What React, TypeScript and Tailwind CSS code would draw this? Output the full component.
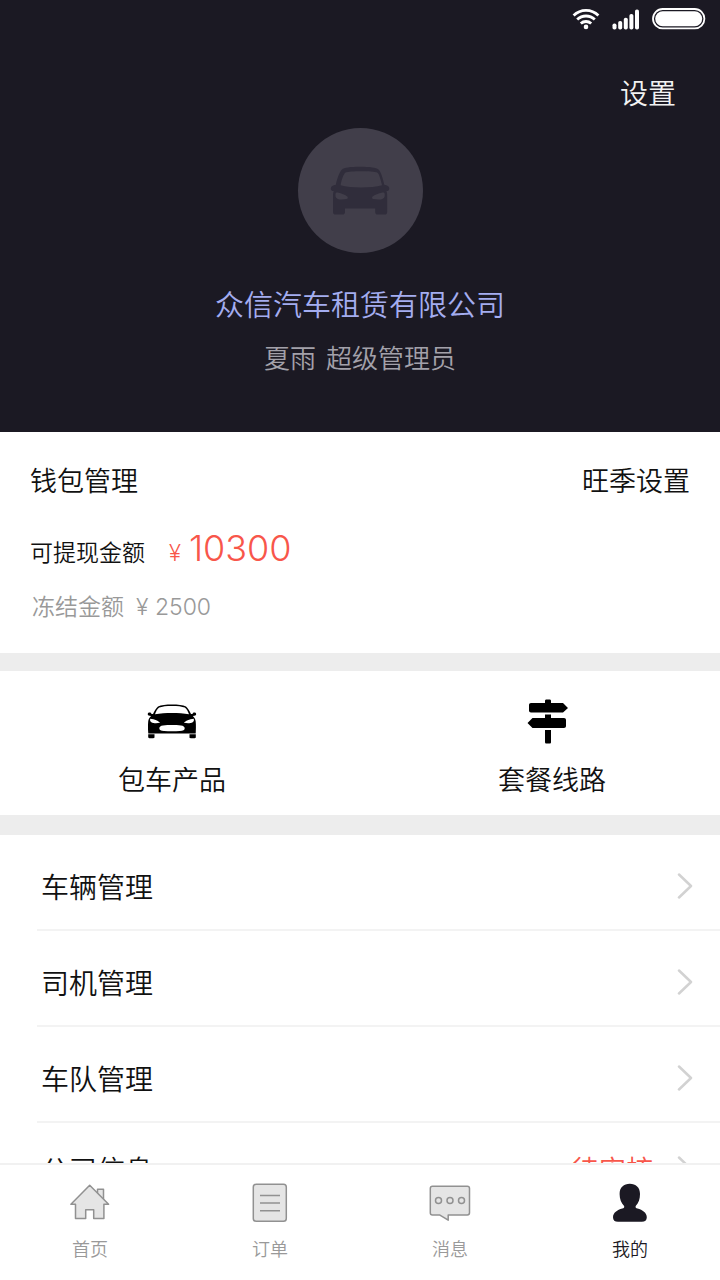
import React from "react";

const WifiIcon = () => (
  <svg width="28" height="22" viewBox="0 0 28 22" fill="none" stroke="#fff" strokeWidth="2.8" aria-hidden="true">
    <path d="M1.6 7.4C8.5 .6 19.5 .6 26.4 7.4" />
    <path d="M5.2 11.6C10.2 6.8 17.8 6.8 22.8 11.6" />
    <path d="M8.8 15.6C11.8 12.8 16.2 12.8 19.2 15.6" />
    <circle cx="14" cy="18.9" r="2.3" fill="#fff" stroke="none" />
  </svg>
);

const SignalIcon = () => (
  <svg width="28" height="21" viewBox="0 0 28 21" fill="#fff" aria-hidden="true">
    <rect x="0.5" y="14.5" width="4" height="6" rx="1.8" />
    <rect x="6.2" y="12" width="4" height="8.5" rx="1.8" />
    <rect x="11.8" y="8.8" width="4" height="11.7" rx="1.8" />
    <rect x="17.4" y="5" width="4" height="15.5" rx="1.8" />
    <rect x="23" y="0.5" width="4" height="20" rx="1.8" />
  </svg>
);

const BatteryIcon = () => (
  <svg width="54" height="22" viewBox="0 0 54 22" fill="none" aria-hidden="true">
    <rect x="1" y="1" width="51.4" height="19.4" rx="9.7" stroke="#fff" strokeWidth="1.8" />
    <rect x="3.2" y="3.2" width="47" height="15" rx="7.5" fill="#fff" />
  </svg>
);

const AvatarCar = () => (
  <svg width="60" height="50" viewBox="0 0 60 50" aria-hidden="true">
    <path
      fill="#302d3b"
      fillRule="evenodd"
      d="M12 3.5C14 1.6 20 .8 30 .8s16 .8 18.500 2.700C51 5.500 53 13 54.300 18.800c3 .2 5 1.700 5 3.600 0 1.600-1 2.600-2.800 2.600.5 1.500.7 3 .7 5V46c0 1.700-1 2.600-2.600 2.600h-6.800c-1.700 0-2.600-1-2.600-2.600v-3.600H15V46c0 1.700-1 2.600-2.600 2.600H5.600C4 48.600 3 47.700 3 46V30c0-2 .2-3.500.7-5C1.800 25 .8 24 .8 22.400c0-1.900 2-3.400 5-3.600C7 13 9.500 5.500 12 3.500zM15.500 6.500C13.500 8 11.500 14 10.600 19.300 16 21 23 21.500 31 21.500s15.500-.7 21-2.200C50.800 14 49.300 8.200 47.500 6.700 45 5.500 38 5.200 31 5.200s-13 .3-15.500 1.300zM5.500 28c.2-1.200 1-1.700 2.200-1.400 4 1 7.500 2.400 9.600 4 .9.900.6 2.300-.8 2.500-2 .3-4.500.6-7.300.3C6.500 33 5 31.200 5.500 28zM54.700 28c-.2-1.200-1-1.700-2.200-1.400-4 1-7.800 2.400-9.900 4-.9.900-.6 2.300.8 2.500 2 .3 4.600.6 7.600.3 2.700-.4 4.200-2.200 3.700-5.400z"
    />
  </svg>
);

const CarIcon = () => (
  <svg width="50" height="36" viewBox="0 0 50 36" aria-hidden="true">
    <path
      fill="#000"
      fillRule="evenodd"
      d="M11 2.500C14 1 19 .5 25 .5s11 .5 14 2c2 1.500 3.500 4.500 5 7.500h1.500c0-1 1-1.700 2.500-1.400 1.400.3 1.600 2.400.4 2.900-.7.3-1.600.4-2.600.4 1.700 1.600 2.700 3.300 2.900 5.600.4 4 .2 8.500 0 12H1.300c-.3-3.500-.5-8-.1-12 .2-2.300 1.200-4 2.900-5.600-1 0-1.900-.1-2.600-.4-1.200-.5-1-2.600.4-2.900C3.500 8.300 4.500 9 4.500 10H6c1.500-3 3-6 5-7.500zM12.200 3.600C10.300 5 9 7.500 8 10.200c5-.9 11-1.200 17-1.200s12 .3 17 1.200c-1-2.700-2.300-5.200-4.200-6.600C35 2.300 30.500 1.900 25 1.900s-10 .4-12.800 1.700zM3.300 14.700c-.5 1.300-.2 2.700 1 3.500 2 1.200 5.500 1.200 8.700.6-1.400-2-5.300-3.800-9.700-4.100zM46.700 14.700c.5 1.300.2 2.700-1 3.500-2 1.200-5.500 1.200-8.700.6 1.400-2 5.300-3.800 9.700-4.100zM16 21.500c-2.300.3-3.700 1.300-3.700 2.700 0 1.900 1.700 2.700 4.700 2.800 5 .3 11 .3 16 0 3-.1 4.700-.9 4.700-2.800 0-1.400-1.400-2.400-3.700-2.700-5.500-.6-12.500-.6-18 0z"
    />
    <path fill="#000" d="M1.200 30.300h6.300v2.800c0 .8-.4 1.200-1.200 1.200H2.400c-.8 0-1.200-.4-1.200-1.200zM42.500 30.300h6.300v2.800c0 .8-.4 1.200-1.200 1.200h-3.900c-.8 0-1.200-.4-1.200-1.200z" />
  </svg>
);

const SignpostIcon = () => (
  <svg width="42" height="46" viewBox="0 0 42 46" fill="#000" aria-hidden="true">
    <path d="M18 4V2c0-1 .5-1.500 1.500-1.500h3c1 0 1.500.5 1.500 1.500v2h12l5 5-5 4.500H4c-1.200 0-2-.8-2-2V6c0-1.200.8-2 2-2z" />
    <path d="M18 19v-3.500h6V19h13c1.200 0 2 .8 2 2v6c0 1.200-.8 2-2 2H5.500L.5 24l5-5z" />
    <path d="M18 31h6v12c0 1-.5 1.500-1.500 1.500h-3c-1 0-1.500-.5-1.500-1.500z" />
  </svg>
);

const HomeIcon = () => (
  <svg width="40" height="40" viewBox="0 0 40 40" fill="#e5e5e5" stroke="#919191" strokeWidth="1.500" strokeLinejoin="round" aria-hidden="true">
    <path d="M27.500 11V6.300h6V17" />
    <path d="M19.700 2.200.9 21.300h4.600v14.200h10.200v-8.700h8v8.700h10.200V21.300h4.700z" />
  </svg>
);

const OrderIcon = () => (
  <svg width="36" height="40" viewBox="0 0 36 40" fill="#e5e5e5" stroke="#919191" strokeWidth="1.500" aria-hidden="true">
    <rect x="1.300" y="1.300" width="33" height="37" rx="2.800" />
    <path d="M8 12.400h20M8 20h20M8 27.700h20" />
  </svg>
);

const MessageIcon = () => (
  <svg width="42" height="40" viewBox="0 0 42 40" fill="#e5e5e5" stroke="#919191" strokeWidth="1.500" strokeLinejoin="round" aria-hidden="true">
    <path d="M3.500 3.200h34.800c1.500 0 2.200.8 2.200 2.200v24.300c0 1.500-.7 2.200-2.200 2.200H19.200v5.300l-8.700-5.300h-7c-1.500 0-2.200-.7-2.200-2.200V5.400c0-1.400.7-2.200 2.200-2.200z" />
    <circle cx="9.500" cy="17.500" r="3" />
    <circle cx="21" cy="17.500" r="3" />
    <circle cx="32.500" cy="17.500" r="3" />
  </svg>
);

const UserIcon = () => (
  <svg width="36" height="40" viewBox="0 0 36 40" fill="#1b1923" aria-hidden="true">
    <path d="M17.800.8c6 0 10.200 3.700 10.200 10.200 0 4.700-1.300 9-4.300 12-.6 1.300.4 2.200 1.800 2.600 5 1.300 9.300 4.300 9.300 8.600 0 3.200-1.800 4.500-5 4.500H6c-3.200 0-5-1.300-5-4.500 0-4.300 4.300-7.300 9.300-8.600 1.400-.4 2.400-1.300 1.800-2.600-3-3-4.500-7.300-4.500-12C7.600 4.500 11.800.8 17.800.8z" />
  </svg>
);

const Chevron = () => (
  <svg width="16" height="26" viewBox="0 0 16 26" fill="none" stroke="#d2d2d2" strokeWidth="2.500" strokeLinecap="round" strokeLinejoin="round" aria-hidden="true">
    <path d="M2 1.500 14 13 2 24.500" />
  </svg>
);

const rows = [
  { label: "车辆管理" },
  { label: "司机管理" },
  { label: "车队管理" },
  { label: "公司信息", status: "待审核" },
];

const tabs = [
  { label: "首页", icon: <HomeIcon /> },
  { label: "订单", icon: <OrderIcon /> },
  { label: "消息", icon: <MessageIcon /> },
  { label: "我的", icon: <UserIcon />, active: true },
];

export default function App() {
  return (
    <div className="flex h-screen flex-col overflow-hidden bg-white font-['Noto_Sans_CJK_SC',sans-serif] font-[350] text-[#111111]">
      <main className="min-h-0 flex-1 overflow-hidden">
        <header className="flex flex-col bg-[#1b1923] pb-[57px]">
          <div className="flex items-center justify-end gap-3 pt-2 pr-[14px]">
            <WifiIcon />
            <SignalIcon />
            <BatteryIcon />
          </div>
          <div className="flex justify-end pt-[42px] pr-11">
            <button className="text-[28px] leading-10 text-[#f2f2f2]">设置</button>
          </div>
          <div className="flex flex-col items-center pt-4">
            <div className="flex size-[125px] items-center justify-center rounded-full bg-[#413e4a]">
              <AvatarCar />
            </div>
            <h1 className="pt-[30px] text-[29px] leading-10 text-[#a4adf0]">众信汽车租赁有限公司</h1>
            <p className="flex gap-[10px] pt-4 text-[26px] leading-9 text-[#a3a1aa]">
              <span>夏雨</span>
              <span>超级管理员</span>
            </p>
          </div>
        </header>

        <section className="flex flex-col px-[30px] pt-[30px] pb-[30px]">
          <div className="flex items-center justify-between text-[27px] leading-9">
            <h2>钱包管理</h2>
            <button>旺季设置</button>
          </div>
          <div className="flex items-baseline pt-[26px] leading-12">
            <span className="text-[23px]">可提现金额</span>
            <span className="pl-6 font-['Inter',sans-serif] font-light text-[#f8564a]">
              <span className="font-['Roboto',sans-serif] text-[23px]">¥</span>
              <span className="pl-2 text-[36px]">10300</span>
            </span>
          </div>
          <p className="flex items-baseline gap-3 pt-[10px] pl-[2px] text-[23px] leading-8 text-[#999999]">
            <span>冻结金额</span>
            <span className="font-['Inter',sans-serif] text-[23px] font-light">¥ 2500</span>
          </p>
        </section>

        <section className="grid grid-cols-2 border-t-[18px] border-b-[20px] border-[#ededed] text-[27px] leading-9">
          <button className="flex flex-col items-center pt-7 pr-4 pb-[18px]">
            <span className="flex h-[46px] items-center"><CarIcon /></span>
            <span className="pt-4">包车产品</span>
          </button>
          <button className="flex flex-col items-center pt-7 pl-6 pb-[18px]">
            <span className="flex h-[46px] items-center pr-2"><SignpostIcon /></span>
            <span className="pt-4">套餐线路</span>
          </button>
        </section>

        <ul className="pl-[37px]">
          {rows.map((row) => (
            <li key={row.label} className="group border-b-2 border-[#f3f3f3]">
              <button className="flex h-[94px] w-full items-center pt-2 pr-[27px] pl-1 text-left text-[28px] group-last:h-[84px]">
                <span className="flex-1">{row.label}</span>
                {row.status && <span className="pr-[24px] text-[27px] text-[#f8564a]">{row.status}</span>}
                <Chevron />
              </button>
            </li>
          ))}
        </ul>
      </main>

      <nav className="grid shrink-0 grid-cols-4 border-t-2 border-[#f1f1f1] bg-white pt-[18px] pb-[18px]">
        {tabs.map((tab) => (
          <a
            key={tab.label}
            href="#"
            className={`flex flex-col items-center gap-[11px] text-[18px] leading-7 ${tab.active ? "text-[#1b1923]" : "text-[#999999]"}`}
          >
            {tab.icon}
            <span>{tab.label}</span>
          </a>
        ))}
      </nav>
    </div>
  );
}
